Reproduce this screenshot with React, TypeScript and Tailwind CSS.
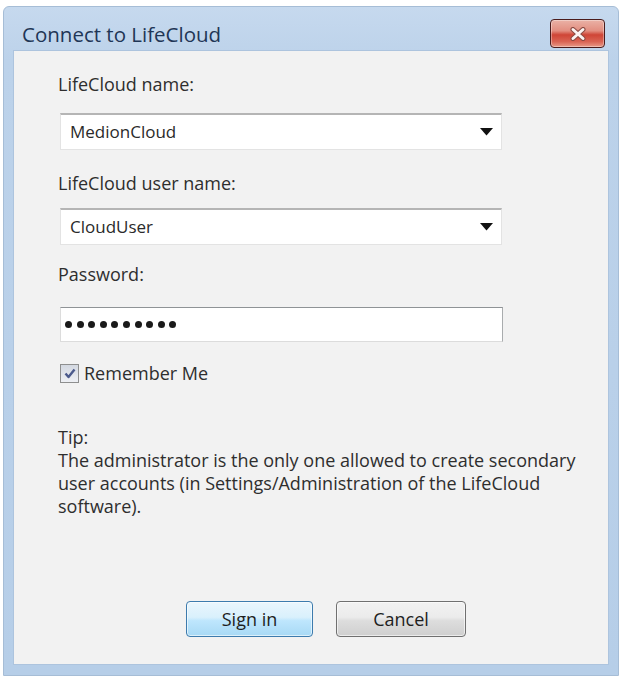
import React from "react";

const font = { fontFamily: '"Open Sans", "Noto Sans", sans-serif' };

function ComboBox({ value }: { value: string }) {
	return (
		<div className="ml-[2px] flex h-[37px] w-[442px] items-center justify-between border border-[#e3e3e3] border-t-[#b5b5b5] border-t-2 bg-white pl-[9px] pr-[7px]">
			<span className="text-[17px] leading-[22px] text-[#2a2a2a]">{value}</span>
			<svg width="13" height="8" viewBox="0 0 13 8" className="mr-[1px]">
				<path d="M0 0 H13 L6.5 7.5 Z" fill="#111" />
			</svg>
		</div>
	);
}

function CloseButton() {
	return (
		<div className="flex h-[29px] w-[55px] items-center justify-center rounded-[4px] border border-[#4a1c1c] bg-[linear-gradient(to_bottom,#eab2a6_0%,#e28e80_40%,#cf4536_55%,#d96353_80%,#e89a88_100%)] shadow-[inset_0_0_0_1px_rgba(255,255,255,0.35)]">
			<svg width="16" height="14" viewBox="0 0 16 14">
				<path d="M3 2.5 L13 11.5 M13 2.5 L3 11.5" stroke="#8a4a42" strokeWidth="5" strokeLinecap="round" />
				<path d="M3 2.5 L13 11.5 M13 2.5 L3 11.5" stroke="#fbf4f2" strokeWidth="3" strokeLinecap="round" />
			</svg>
		</div>
	);
}

export default function App() {
	return (
		<div className="min-h-[676px] w-[621px] bg-white pl-[3px] pt-[6px]" style={font}>
			<div className="flex h-[670px] w-[616px] flex-col rounded-t-[6px] border border-[#a6bdd6] bg-[linear-gradient(to_bottom,#c6d9ee_0%,#bcd2ea_8%,#b6cee8_100%)]">
				{/* title bar */}
				<div className="flex h-[43px] shrink-0 items-start justify-between pl-[18px] pr-[13px]">
					<span className="mt-[14px] text-[20.5px] leading-[26px] text-[#1f3656]">Connect to LifeCloud</span>
					<div className="mt-[12px]">
						<CloseButton />
					</div>
				</div>

				{/* client area */}
				<div className="mx-[9px] mb-[10px] flex flex-1 flex-col border border-[#adc4de] bg-[#f2f2f2] pl-[44px] text-[18px] leading-[24px] text-[#2e2e2e]">
					<p className="mt-[21px]">LifeCloud name:</p>
					<div className="mt-[17px]">
						<ComboBox value="MedionCloud" />
					</div>

					<p className="mt-[21px]">LifeCloud user name:</p>
					<div className="mt-[13px]">
						<ComboBox value="CloudUser" />
					</div>

					<p className="mt-[17px]">Password:</p>
					<div className="ml-[2px] mt-[21px] flex h-[35px] w-[443px] items-center gap-[4.6px] border border-[#dcdcdc] border-t-[#8f9396] border-r-[#a9acae] bg-white pl-[4px]">
						{Array.from({ length: 10 }).map((_, i) => (
							<span key={i} className="h-[7px] w-[7px] rounded-full bg-[#1a1a1a]" />
						))}
					</div>

					<div className="mt-[19px] flex h-[24px] items-center">
						<div className="ml-[2px] flex h-[19px] w-[19px] items-center justify-center border border-[#8e8f8f] bg-[linear-gradient(to_bottom,#d3d8e1,#eef0f4)]">
							<svg width="12" height="11" viewBox="0 0 12 11">
								<path d="M1.5 5.5 L4.5 9 L10.5 1.5" fill="none" stroke="#4b5a8c" strokeWidth="2.4" strokeLinejoin="round" />
							</svg>
						</div>
						<span className="ml-[5px]">Remember Me</span>
					</div>

					<div className="mt-[41px] w-[540px] leading-[23px]">
						<p>Tip:</p>
						<p>
							The administrator is the only one allowed to create secondary user accounts (in Settings/Administration of the LifeCloud
							software).
						</p>
					</div>

					<div className="mt-auto mb-[27px] ml-[128px] flex gap-[23px]">
						<button className="h-[36px] w-[127px] rounded-[4px] border border-[#3d7bad] bg-[linear-gradient(to_bottom,#eaf6fd_0%,#d9f0fc_45%,#bee6fd_55%,#a7d9f5_100%)] text-[18px] text-[#1e1e1e] shadow-[inset_0_0_0_1px_rgba(255,255,255,0.6)]">
							Sign in
						</button>
						<button className="h-[36px] w-[130px] rounded-[4px] border border-[#707070] bg-[linear-gradient(to_bottom,#f2f2f2_0%,#ebebeb_45%,#dddddd_55%,#cfcfcf_100%)] text-[18px] text-[#1e1e1e] shadow-[inset_0_0_0_1px_rgba(255,255,255,0.6)]">
							Cancel
						</button>
					</div>
				</div>
			</div>
		</div>
	);
}
